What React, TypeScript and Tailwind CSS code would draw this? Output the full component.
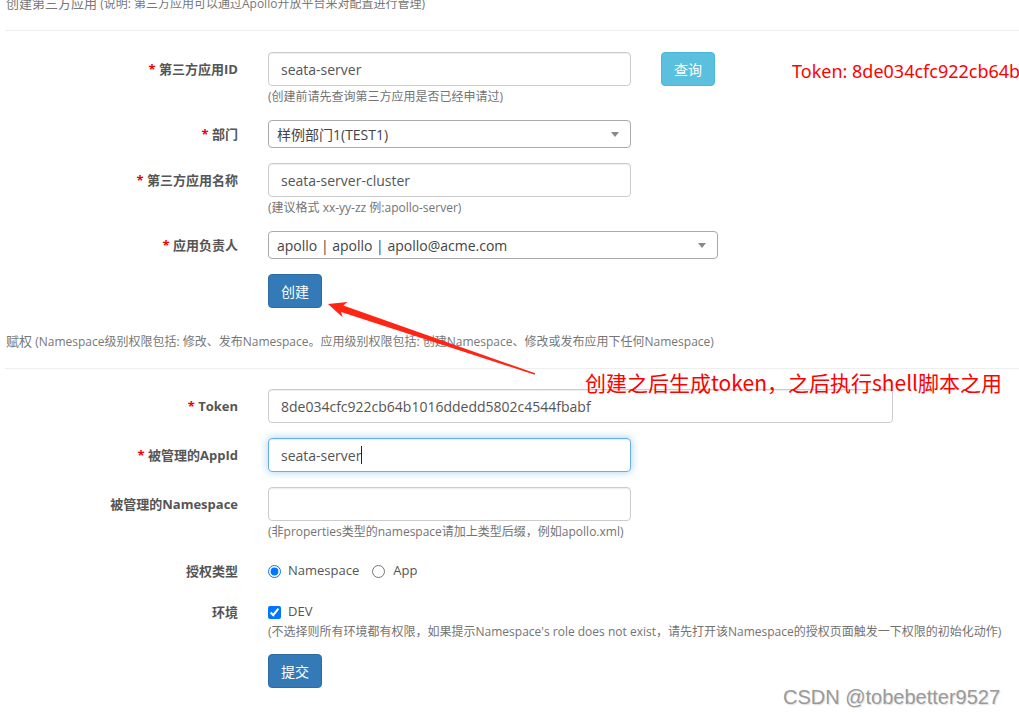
import React from 'react';

// ==========================================
// PIECES
// ==========================================

function Label({ text, required }: { text: string; required?: boolean }) {
  return (
    <div className="w-[238px] shrink-0 text-right pt-[7px] text-[13px] leading-[20px] font-bold text-[#555]">
      {required && <span className="text-[#e00]">* </span>}
      {text}
    </div>
  );
}

function TextBox({ value, width, focused }: { value?: string; width: string; focused?: boolean }) {
  return (
    <div
      className={`${width} h-[34px] flex items-center px-[12px] rounded-[4px] border text-[14px] text-[#555] ${
        focused
          ? 'border-[#66afe9] shadow-[inset_0_1px_1px_rgba(0,0,0,0.075),0_0_8px_rgba(102,175,233,0.6)]'
          : 'border-[#ccc] shadow-[inset_0_1px_1px_rgba(0,0,0,0.075)]'
      }`}
    >
      <span className="whitespace-nowrap">{value}</span>
      {focused && <span className="inline-block w-px h-[18px] bg-[#222]" />}
    </div>
  );
}

function SelectBox({ value, width }: { value: string; width: string }) {
  return (
    <div className={`${width} h-[28px] flex items-center pl-[8px] pr-[11px] rounded-[4px] border border-[#aaa] text-[14px] text-[#444]`}>
      <span className="flex-1 whitespace-nowrap">{value}</span>
      <span className="w-0 h-0 border-l-[4px] border-r-[4px] border-t-[5px] border-l-transparent border-r-transparent border-t-[#888]" />
    </div>
  );
}

function Help({ children }: { children: React.ReactNode }) {
  return <div className="mt-[2px] text-[12px] leading-[17px] text-[#737373] whitespace-nowrap">{children}</div>;
}

function Button({ text, info }: { text: string; info?: boolean }) {
  return (
    <div
      className={`w-[54px] h-[34px] flex items-center justify-center rounded-[4px] border text-[14px] text-white ${
        info ? 'bg-[#5bc0de] border-[#46b8da]' : 'bg-[#337ab7] border-[#2e6da4]'
      }`}
    >
      {text}
    </div>
  );
}

function SectionHead({ title, note }: { title: string; note: string }) {
  return (
    <>
      <div className="px-[6px] text-[12px] leading-[17px] text-[#777] whitespace-nowrap">
        <span className="text-[13px]">{title}</span> {note}
      </div>
      <div className="ml-[5px] mt-[18px] border-t border-[#eee]" />
    </>
  );
}

// ==========================================
// APP
// ==========================================

export default function App() {
  return (
    <div className="relative w-[1019px] h-[714px] overflow-hidden bg-white font-['Open_Sans','Noto_Sans_CJK_SC',sans-serif]">
      {/* creazione app terza parte */}
      <div className="-mt-[5px]">
        <SectionHead title="创建第三方应用" note="(说明: 第三方应用可以通过Apollo开放平台来对配置进行管理)" />
      </div>

      <div className="pt-[21px]">
        <div className="flex mb-[15px]">
          <Label text="第三方应用ID" required />
          <div className="ml-[30px]">
            <div className="flex gap-[30px]">
              <TextBox value="seata-server" width="w-[363px]" />
              <Button text="查询" info />
            </div>
            <Help>(创建前请先查询第三方应用是否已经申请过)</Help>
          </div>
        </div>

        <div className="flex mb-[15px]">
          <div className="w-[238px] shrink-0 text-right pt-[4px] text-[13px] leading-[20px] font-bold text-[#555]">
            <span className="text-[#e00]">* </span>部门
          </div>
          <div className="ml-[30px]">
            <SelectBox value="样例部门1(TEST1)" width="w-[363px]" />
          </div>
        </div>

        <div className="flex mb-[15px]">
          <Label text="第三方应用名称" required />
          <div className="ml-[30px]">
            <TextBox value="seata-server-cluster" width="w-[363px]" />
            <Help>(建议格式 xx-yy-zz 例:apollo-server)</Help>
          </div>
        </div>

        <div className="flex mb-[15px]">
          <div className="w-[238px] shrink-0 text-right pt-[4px] text-[13px] leading-[20px] font-bold text-[#555]">
            <span className="text-[#e00]">* </span>应用负责人
          </div>
          <div className="ml-[30px]">
            <SelectBox value="apollo | apollo | apollo@acme.com" width="w-[450px]" />
          </div>
        </div>

        <div className="ml-[268px]">
          <Button text="创建" />
        </div>
      </div>

      {/* assegnazione permessi */}
      <div className="mt-[25px]">
        <SectionHead title="赋权" note="(Namespace级别权限包括: 修改、发布Namespace。应用级别权限包括: 创建Namespace、修改或发布应用下任何Namespace)" />
      </div>

      <div className="pt-[20px]">
        <div className="flex mb-[15px]">
          <Label text="Token" required />
          <div className="ml-[30px]">
            <TextBox value="8de034cfc922cb64b1016ddedd5802c4544fbabf" width="w-[625px]" />
          </div>
        </div>

        <div className="flex mb-[15px]">
          <Label text="被管理的AppId" required />
          <div className="ml-[30px]">
            <TextBox value="seata-server" width="w-[363px]" focused />
          </div>
        </div>

        <div className="flex mb-[15px]">
          <Label text="被管理的Namespace" />
          <div className="ml-[30px]">
            <TextBox width="w-[363px]" />
            <Help>(非properties类型的namespace请加上类型后缀，例如apollo.xml)</Help>
          </div>
        </div>

        <div className="flex mb-[14px]">
          <div className="w-[238px] shrink-0 text-right pt-[6px] text-[13px] leading-[20px] font-bold text-[#555]">授权类型</div>
          <div className="ml-[30px] pt-[6px] flex items-center h-[26px] text-[13px] text-[#555]">
            <input type="radio" name="tipo" defaultChecked className="m-0 w-[13px] h-[13px] accent-[#0075ff]" />
            <span className="ml-[7px]">Namespace</span>
            <input type="radio" name="tipo" className="ml-[13px] m-0 w-[13px] h-[13px]" />
            <span className="ml-[8px]">App</span>
          </div>
        </div>

        <div className="flex mb-[14px]">
          <Label text="环境" />
          <div className="ml-[30px]">
            <div className="pt-[7px] flex items-center h-[27px] text-[13px] text-[#555]">
              <input type="checkbox" defaultChecked className="m-0 w-[13px] h-[13px] accent-[#0075ff]" />
              <span className="ml-[7px]">DEV</span>
            </div>
            <div className="mt-[1px] text-[12px] leading-[17px] text-[#737373] whitespace-nowrap">
              (不选择则所有环境都有权限，如果提示Namespace's role does not exist，请先打开该Namespace的授权页面触发一下权限的初始化动作)
            </div>
          </div>
        </div>

        <div className="ml-[268px]">
          <Button text="提交" />
        </div>
      </div>

      {/* annotazioni sovrapposte */}
      <div className="absolute left-[792px] top-[59px] whitespace-nowrap text-[18px] leading-[24px] text-[#ff0000] font-['Noto_Sans','Noto_Sans_CJK_SC',sans-serif]">
        Token: 8de034cfc922cb64b
      </div>
      <div className="absolute left-[585px] top-[368px] whitespace-nowrap text-[21px] leading-[28px] text-[#ff0000] font-['Noto_Sans_CJK_SC',sans-serif]">
        创建之后生成token，之后执行shell脚本之用
      </div>
      <svg className="absolute left-0 top-0" width="1019" height="714" viewBox="0 0 1019 714">
        <polygon
          points="328,304 347.6,302.1 343.3,305.4 535.2,373.3 534.8,374.7 341.1,312 342.6,317.3"
          fill="#ff2414"
        />
      </svg>
      <div className="absolute left-[783px] top-[684px] whitespace-nowrap text-[20px] leading-[26px] text-[#9a9a9a] [text-shadow:1px_1px_1px_#ddd] font-['Liberation_Sans',sans-serif]">
        CSDN @tobebetter9527
      </div>
    </div>
  );
}
